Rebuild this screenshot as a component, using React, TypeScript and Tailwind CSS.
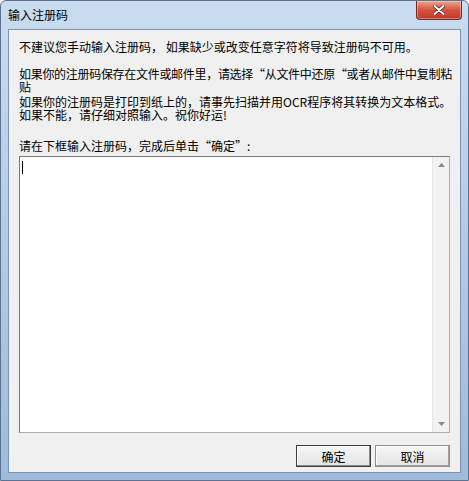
import React from 'react';

const font = { fontFamily: '"Noto Sans CJK SC", "Liberation Sans", sans-serif' };

const Button: React.FC<{ label: string; primary?: boolean }> = ({ label, primary }) => (
  <div
    className={`w-[75px] h-[22px] flex items-center justify-center text-[12px] text-black bg-gradient-to-b from-[#f6f6f6] to-[#e4e4e4] border ${
      primary ? 'border-[#3c3c3c] shadow-[inset_-1px_-1px_0_#8a8a8a,inset_1px_1px_0_#ffffff]' : 'border-[#8e8f8f] shadow-[inset_-1px_-1px_0_#a0a0a0,inset_1px_1px_0_#ffffff]'
    }`}
  >
    {label}
  </div>
);

export default function App() {
  return (
    <div
      className="w-[469px] h-[481px] flex flex-col bg-gradient-to-b from-[#c9dcf0] via-[#b3cbe5] to-[#9fbbd9] border border-[#5b7390] rounded-t-[6px] overflow-hidden"
      style={font}
    >
      {/* title bar */}
      <div className="h-[28px] flex items-start justify-between shrink-0">
        <div className="pl-[7px] pt-[7px] text-[12px] leading-[14px] text-black">输入注册码</div>
        <div className="mr-[6px] w-[46px] h-[19px] rounded-b-[4px] border border-t-0 border-[#7a2a22] bg-gradient-to-b from-[#e8a493] via-[#d4533c] to-[#c0392b] flex items-center justify-center shadow-[inset_0_0_0_1px_rgba(255,255,255,0.35)]">
          <svg width="12" height="10" viewBox="0 0 12 10">
            <path d="M1.5 1 L10.5 9 M10.5 1 L1.5 9" stroke="#5a1a14" strokeWidth="3.4" strokeLinecap="round" />
            <path d="M1.5 1 L10.5 9 M10.5 1 L1.5 9" stroke="#ffffff" strokeWidth="2" strokeLinecap="round" />
          </svg>
        </div>
      </div>

      {/* client area */}
      <div className="mx-[7px] mb-[7px] flex-1 flex flex-col bg-[#f0f0f0] border border-[#7b93b0] text-[12px] leading-[13px] text-black">
        <div className="pl-[10px] pt-[10px] whitespace-nowrap">
          <div>不建议您手动输入注册码， 如果缺少或改变任意字符将导致注册码不可用。</div>
          <div className="mt-[14px] tracking-[-0.3px]">如果你的注册码保存在文件或邮件里，请选择“从文件中还原“或者从邮件中复制粘</div>
          <div>贴</div>
          <div className="mt-[2px]">如果你的注册码是打印到纸上的，请事先扫描并用OCR程序将其转换为文本格式。</div>
          <div>如果不能，请仔细对照输入。祝你好运!</div>
          <div className="mt-[18px]">请在下框输入注册码，完成后单击“确定”:</div>
        </div>

        {/* text box */}
        <div className="mx-[10px] mt-[4px] h-[277px] flex bg-white border border-[#abadb3] border-t-[#7a7a7a] border-l-[#7a7a7a]">
          <div className="flex-1 pl-[2px] pt-[4px]">
            <div className="w-[1px] h-[13px] bg-black" />
          </div>
          <div className="w-[17px] flex flex-col justify-between items-center bg-[#f2f2f2] border-l border-[#e6e6e6] py-[6px]">
            <svg width="7" height="4" viewBox="0 0 7 4">
              <path d="M0 4 L3.5 0 L7 4 Z" fill="#8a8a8a" />
            </svg>
            <svg width="7" height="4" viewBox="0 0 7 4">
              <path d="M0 0 L3.5 4 L7 0 Z" fill="#8a8a8a" />
            </svg>
          </div>
        </div>

        {/* buttons */}
        <div className="mt-[12px] pr-[10px] flex justify-end gap-[4px]">
          <Button label="确定" primary />
          <Button label="取消" />
        </div>
      </div>
    </div>
  );
}
